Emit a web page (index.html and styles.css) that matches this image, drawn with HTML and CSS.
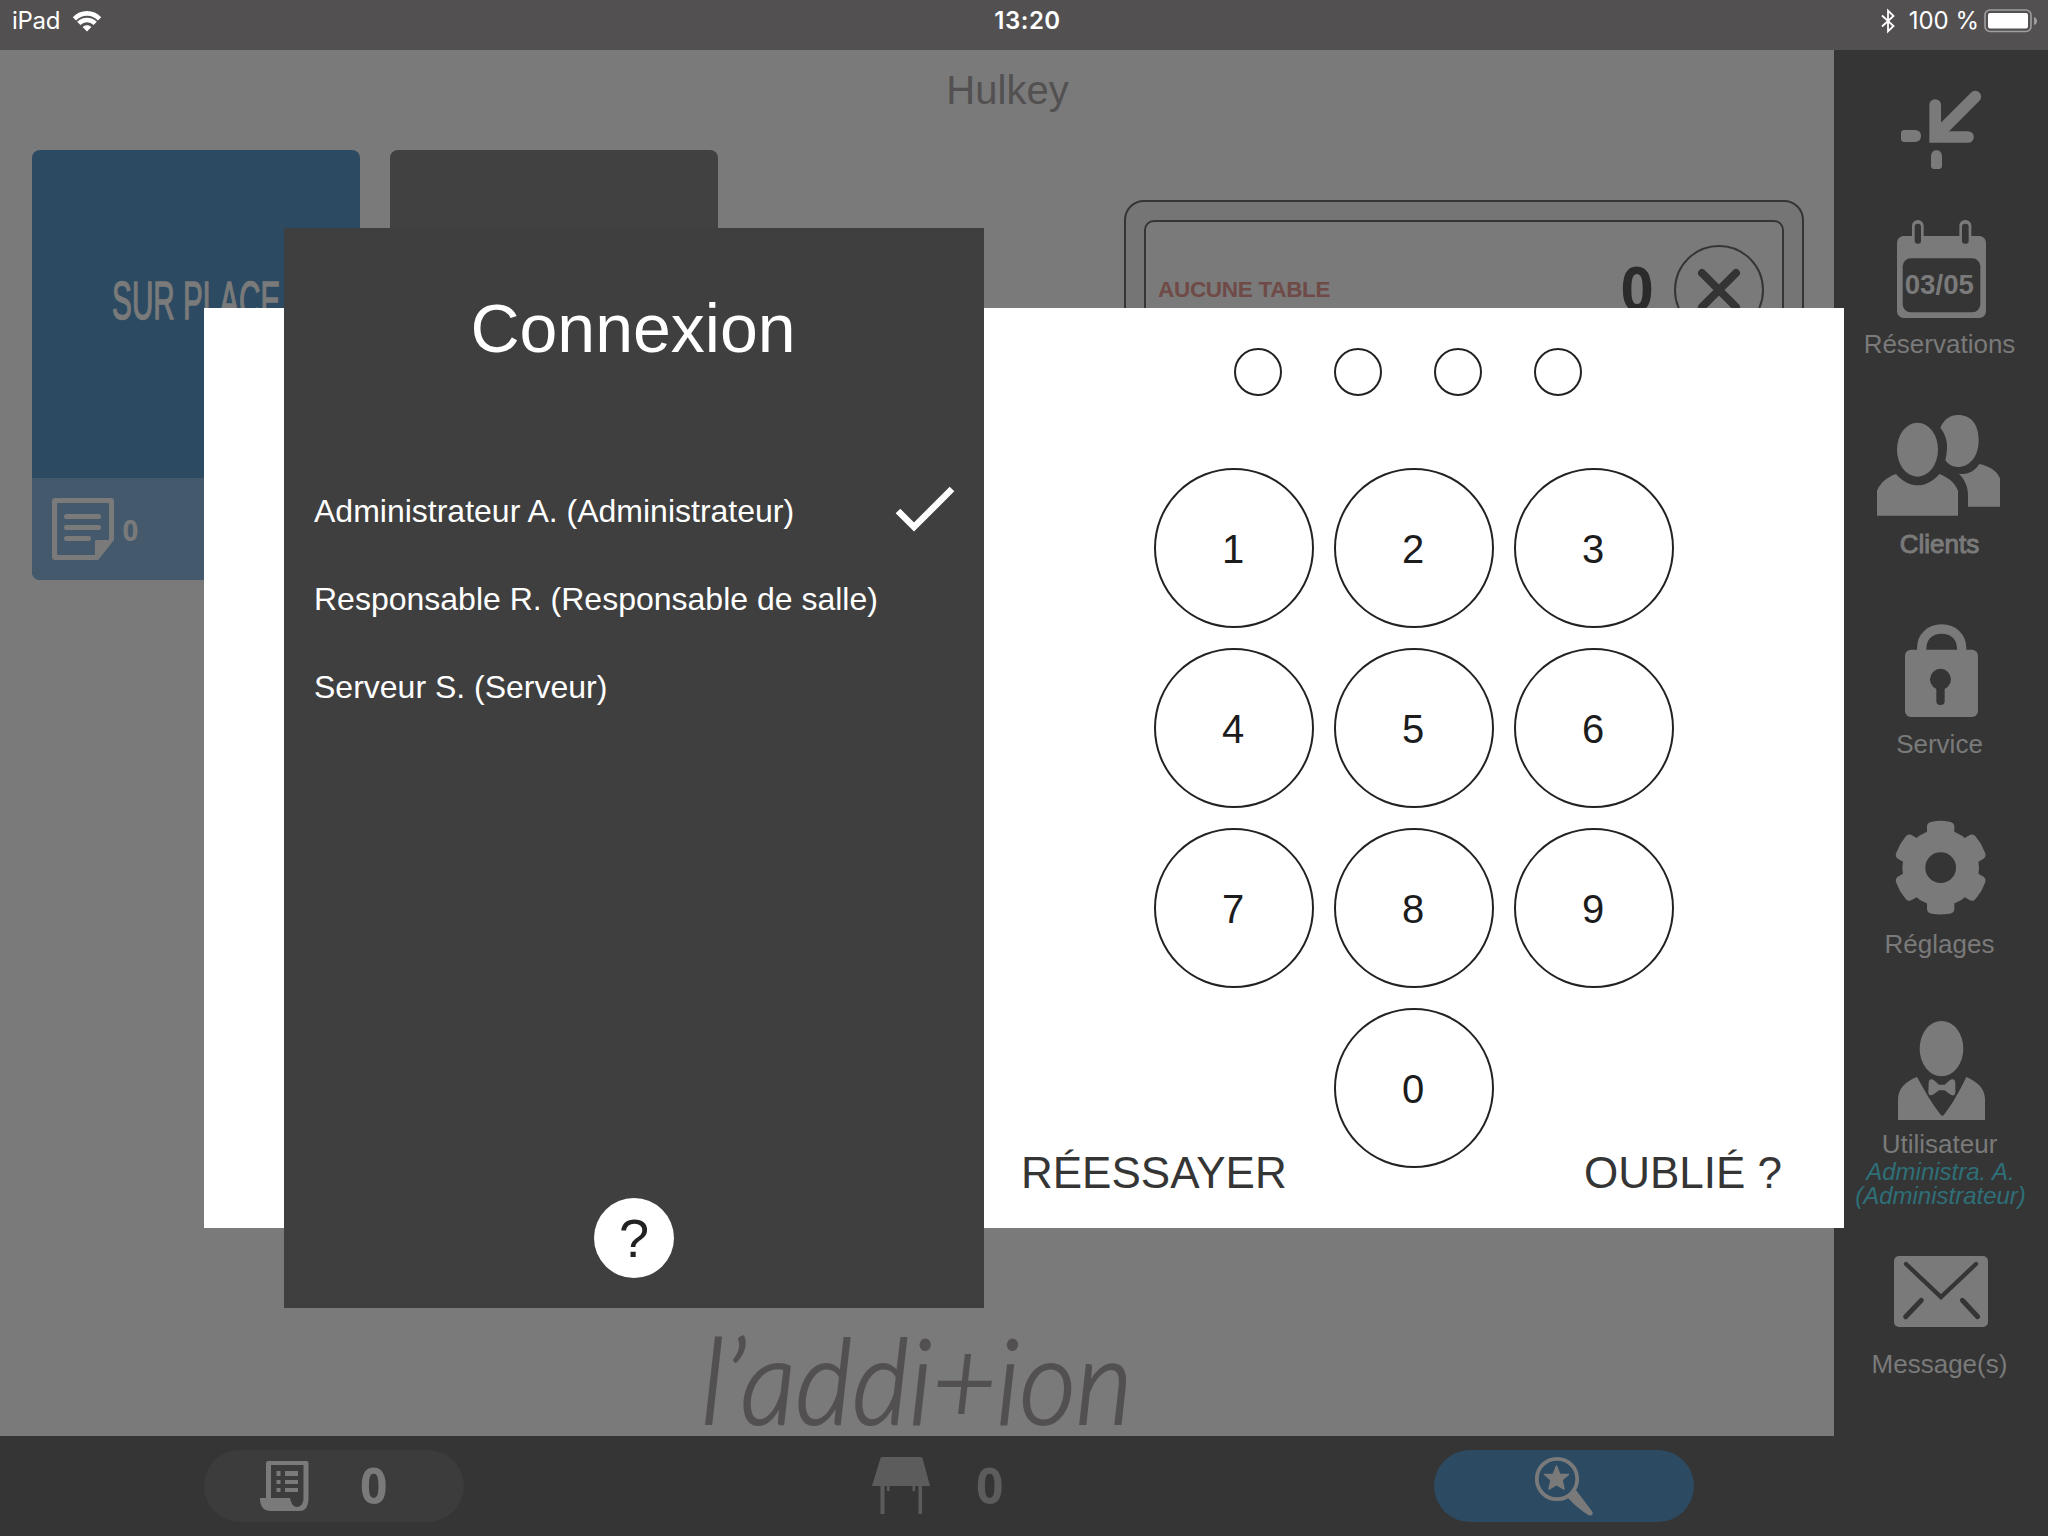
FILE: index.html
```html
<!DOCTYPE html>
<html lang="fr">
<head>
<meta charset="utf-8">
<title>Connexion</title>
<link rel="stylesheet" href="styles.css">
</head>
<body>
<div class="app">
  <header class="status">
    <div class="status-left">
      <span>iPad</span>
      <svg class="wifi" width="30" height="22" viewBox="0 0 30 22" fill="none" stroke="#fff" stroke-width="4.6">
        <path d="M2.4 8.8C9.4 1.6 20.6 1.6 27.6 8.8"/>
        <path d="M6.8 13.4C11.4 8.8 18.6 8.8 23.2 13.4"/>
        <path d="M10.6 17.1C13.2 14.6 16.8 14.6 19.4 17.1L15 21.6Z" fill="#fff" stroke="none"/>
      </svg>
    </div>
    <div class="clock">13:20</div>
    <div class="status-right">
      <svg width="16" height="26" viewBox="0 0 16 26" fill="none" stroke="#fff" stroke-width="1.8"><path d="M2 7.5L13.5 18L8 23.3V2.7L13.5 8L2 18.5"/></svg>
      <span class="percent">100 %</span>
      <svg width="54" height="24" viewBox="0 0 54 24"><rect x="1" y="1" width="46" height="21.500" rx="5" fill="none" stroke="#a09e9f" stroke-width="1.600"/><rect x="4" y="4" width="40" height="15.500" rx="2" fill="#fff"/><path d="M50 8Q53 9 53 12T50 16Z" fill="#a09e9f"/></svg>
    </div>
  </header>

  <main class="room">
    <h1 class="room-name">Hulkey</h1>
    <div class="board">
      <section class="card card-blue">
        <div class="card-title"><span>SUR PLACE</span></div>
        <div class="card-foot">
          <svg width="62" height="62" viewBox="52 498 62 62" fill="#7a7a7a">
            <path fill-rule="evenodd" d="M55 498H111Q114 498 114 501V540L99 559Q98 560 97 560H55Q52 560 52 557V501Q52 498 55 498ZM58 503Q57 503 57 504V554Q57 555 58 555H95V541Q95 540 96 540H109V504Q109 503 108 503Z"/>
            <rect x="64" y="514" width="37" height="5" rx="2.500"/><rect x="64" y="525" width="37" height="5" rx="2.500"/><rect x="64" y="536" width="27" height="5" rx="2.500"/>
          </svg>
          <span class="card-count">0</span>
        </div>
      </section>
      <section class="card card-dark"></section>
      <section class="ticket">
        <div class="ticket-inner">
          <span class="ticket-label">AUCUNE TABLE</span>
          <span class="ticket-count">0</span>
          <span class="ticket-close"><svg width="44" height="44" viewBox="0 0 44 44"><path d="M5 5L39 39M39 5L5 39" stroke="#343434" stroke-width="8" stroke-linecap="round"/></svg></span>
        </div>
      </section>
    </div>
    <div class="brand">l’addi+ion</div>
  </main>

  <nav class="side">
    <svg class="collapse" width="214" height="159" viewBox="1834 50 214 159" fill="none" stroke="#7a7a7a" stroke-width="11.700">
      <path d="M1935.200 105V137H1968" stroke-linecap="round"/><path d="M1975.300 96.700L1936 136" stroke-linecap="round"/>
      <g fill="#7a7a7a" stroke="none"><path d="M1903 130H1915Q1921 130.500 1921 136T1915 142H1903L1901 140V132Z"/><path d="M1931 167V156Q1931.500 150.300 1936.500 150.300T1942 156V167L1940 169H1933Z"/></g>
    </svg>
    <div class="item">
      <svg class="icon" viewBox="1834 209 214 120"><g transform="translate(1820 0) scale(.33333)" fill="#7a7a7a">
        <rect x="231" y="708" width="267" height="246" rx="20"/><rect x="276" y="660" width="35" height="75" rx="17"/><rect x="418" y="660" width="36" height="75" rx="17"/>
        <g fill="#353535"><rect x="248" y="775" width="233" height="162" rx="24"/><rect x="284" y="671" width="19" height="60" rx="9"/><rect x="426" y="671" width="20" height="60" rx="9"/></g>
        <text x="358" y="882" class="cal-date">03/05</text></g></svg>
      <span class="label">Réservations</span>
    </div>
    <div class="item">
      <svg class="icon" viewBox="1834 409 214 120"><g transform="translate(1820 370) scale(.33333)" fill="#7a7a7a">
        <ellipse cx="292.500" cy="239" rx="61.500" ry="81"/>
        <path d="M171 437V362C180 340 200 322 228 312C250 337 272 346 293 346C316 346 338 335 358 312C385 322 405 338 414 362V437Z"/>
        <path d="M361 173C372 148 390 135 414 135C455 135 476 165 476 210C476 262 447 291 414 291C398 291 385 284 376 271C383 240 387 205 361 173Z"/>
        <path d="M478 282C505 288 530 300 540 325V410H444V375C444 350 434 328 417 312C445 314 465 303 478 282Z"/></g></svg>
      <span class="label label-strong">Clients</span>
    </div>
    <div class="item">
      <svg class="icon" viewBox="1834 609 214 120"><g transform="translate(1820 370) scale(.33333)" fill="#7a7a7a">
        <rect x="255" y="839" width="219" height="202" rx="18"/>
        <path d="M305 845V835C305 800 330 777 365 777C400 777 425 800 425 835V845" fill="none" stroke="#7a7a7a" stroke-width="28"/>
        <g fill="#353535"><circle cx="361.500" cy="928" r="31.500"/><rect x="349" y="940" width="25" height="65" rx="12"/></g></g></svg>
      <span class="label">Service</span>
    </div>
    <div class="item">
      <svg class="icon" viewBox="1834 809 214 120"><g transform="translate(1820 770) scale(.33333) translate(362 293)" fill="#7a7a7a">
        <circle r="115"/>
        <g id="teeth"><path id="tooth" d="M-41 -80V-125C-40 -134 -34 -137 -26 -138Q0 -143 26 -138C34 -137 40 -134 41 -125V-80Z"/>
        <use href="#tooth" transform="rotate(60)"/><use href="#tooth" transform="rotate(120)"/><use href="#tooth" transform="rotate(180)"/><use href="#tooth" transform="rotate(240)"/><use href="#tooth" transform="rotate(300)"/></g>
        <circle r="46" fill="#353535"/></g></svg>
      <span class="label">Réglages</span>
    </div>
    <div class="item">
      <svg class="icon" viewBox="1834 1009 214 120"><g transform="translate(1820 770) scale(.33333)" fill="#7a7a7a">
        <ellipse cx="364.500" cy="836" rx="65.500" ry="83"/>
        <path d="M234 1050V985C236 955 255 935 291 921C315 965 337 1003 362 1034Q367 1040 372 1034C397 1003 420 960 439 921C470 935 493 952 495 985V1050Z"/>
        <path d="M326 940C326 928 333 926 341 930L357 944H374L390 930C400 925 406 930 406 940V966C406 977 398 979 390 973L374 961H357L341 973C331 979 325 975 325 965Z"/></g></svg>
      <span class="label">Utilisateur</span>
      <span class="who">Administra. A.<br>(Administrateur)</span>
    </div>
    <div class="item item-last">
      <svg class="icon" viewBox="1834 1229 214 120"><g transform="translate(1820 1130) scale(.33333)">
        <rect x="222" y="378" width="282" height="213" rx="15" fill="#7a7a7a"/>
        <g fill="none" stroke="#353535" stroke-linecap="round" stroke-width="13"><path d="M258 402L363 501L468 402"/><path d="M257 560L304 511M427 511L473 560" stroke-width="15"/></g></g></svg>
      <span class="label">Message(s)</span>
    </div>
  </nav>

  <footer class="bar">
    <div class="pill pill-grey">
      <svg width="49" height="50" viewBox="260 1461 49 50" fill="#7a7a7a"><path fill-rule="evenodd" d="M268 1461H307Q308.500 1461 308.500 1463V1498C308.500 1507 305 1511 300 1511H271C264 1511 260 1507 260 1498H266V1463Q266 1461 268 1461ZM271 1465V1498H290C291 1503 293 1507 297 1507C301 1507 303.500 1503 303.500 1498V1465Z"/><path d="M276.500 1471h4v5h-4zM285 1471h13v5h-13zM276.500 1480h4v4h-4zM285 1480h13v4h-13zM276.500 1488h4v4h-4zM285 1488h13v4h-13z"/></svg>
      <span class="count">0</span>
    </div>
    <div class="pill pill-plain">
      <svg width="58" height="58" viewBox="872 1457 58 58" fill="#5c5c5c"><path d="M882 1457H921L922.500 1458L930 1486H922V1514H918.500V1486H915V1491H912.500V1486H889.500V1491H887V1486H884.500V1514H880.500V1486H872L880.500 1458Z"/></svg>
      <span class="count">0</span>
    </div>
    <div class="pill pill-blue">
      <svg width="58" height="60" viewBox="1535 1456 58 60" fill="#7a7a7a"><circle cx="1557" cy="1479" r="20.200" fill="none" stroke="#7a7a7a" stroke-width="3.800"/><path d="M1568 1498L1576 1490Q1585 1502 1592.500 1512Q1593.500 1516 1589 1515.500Q1577 1508 1568 1498Z"/><path d="M1556.500 1466L1559.800 1474.500H1568.500L1562 1480L1564 1489L1556.500 1484.500L1549 1489L1551 1480L1544.500 1474.500H1553.200Z" stroke="#7a7a7a" stroke-width="1.500" stroke-linejoin="round"/></svg>
    </div>
  </footer>

  <div class="modal">
    <section class="pin">
      <div class="dots"><i></i><i></i><i></i><i></i></div>
      <div class="keys">
        <b>1</b><b>2</b><b>3</b><b>4</b><b>5</b><b>6</b><b>7</b><b>8</b><b>9</b><b class="zero">0</b>
      </div>
      <div class="actions"><span>RÉESSAYER</span><span>OUBLIÉ ?</span></div>
    </section>
    <section class="users">
      <h2>Connexion</h2>
      <ul>
        <li>Administrateur A. (Administrateur)<svg class="check" width="60" height="46" viewBox="0 0 60 46"><path d="M3 25L19 41L57 3" fill="none" stroke="#fff" stroke-width="6.500"/></svg></li>
        <li>Responsable R. (Responsable de salle)</li>
        <li>Serveur S. (Serveur)</li>
      </ul>
      <div class="help">?</div>
    </section>
  </div>
</div>
</body>
</html>
```
FILE: styles.css
```css
* { box-sizing: border-box; }
body { margin: 0; font-family: "Liberation Sans", Arial, sans-serif; }
h1, h2, ul { margin: 0; padding: 0; font-weight: 400; list-style: none; }
svg { display: block; flex: none; }

.app {
  position: relative;
  width: 2048px;
  height: 1536px;
  display: grid;
  grid-template: 50px 1386px 100px / 1834px 214px;
  background: #353535;
  overflow: hidden;
}

/* status bar */
.status {
  grid-column: 1 / 3;
  display: grid;
  grid-template-columns: 1fr auto 1fr;
  align-items: center;
  height: 50px;
  padding: 0 10px 8px 12px;
  background: #535051;
  color: #fff;
  font: 24px/42px Inter, sans-serif;
}
.status-left, .status-right { display: flex; align-items: center; }
.status-left { gap: 12px; letter-spacing: -.3px; }
.status-right { justify-content: flex-end; }
.percent { margin: 0 5px 0 13px; }
.clock { font-weight: 600; letter-spacing: .5px; padding-left: 5px; }

/* room */
.room {
  grid-row: 2 / 3;
  display: flex;
  flex-direction: column;
  background: #7a7a7a;
}
.room-name {
  height: 100px;
  padding: 16px 0 0 181px;
  text-align: center;
  font-size: 40px;
  line-height: 48px;
  color: #535051;
}
.board { display: flex; align-items: flex-start; padding: 0 30px 0 32px; }
.card { width: 328px; height: 430px; border-radius: 8px; overflow: hidden; margin-right: 30px; }
.card-blue { background: #2c4b63; }
.card-dark { background: #414141; }
.card-title {
  height: 328px;
  display: flex;
  align-items: center;
  justify-content: center;
  padding-bottom: 28px;
  font-size: 53px;
  color: #7a7a7a;
}
.card-title span {
  transform: scaleX(.56);
  white-space: nowrap;
  -webkit-text-stroke: 1.500px #7a7a7a;
}
.card-foot {
  display: flex;
  align-items: center;
  height: 102px;
  padding-left: 20px;
  background: #445a6c;
  color: #7a7a7a;
}
.card-count { margin: 2px 0 0 8px; font: 700 29px/40px "Open Sans", sans-serif; transform: scaleX(.95); }
.ticket {
  width: 680px;
  height: 480px;
  margin: 50px 0 0 auto;
  padding: 18px;
  border: 2px solid #353535;
  border-radius: 20px;
  background: #757575;
}
.ticket-inner {
  height: 440px;
  display: flex;
  align-items: flex-start;
  padding: 23px 18px 0 12px;
  border: 2px solid #353535;
  border-radius: 10px;
  background: #7a7a7a;
}
.ticket-label { flex: 1; font-size: 22.500px; font-weight: 700; letter-spacing: -.3px; line-height: 90px; color: #6f4a47; }
.ticket-count { margin: -2px 20px 0 0; font: 700 60px/90px "Open Sans", sans-serif; color: #2b2b2b; transform: scaleX(.95); }
.ticket-close {
  width: 90px;
  height: 90px;
  display: flex;
  align-items: center;
  justify-content: center;
  border: 2px solid #353535;
  border-radius: 50%;
}
.brand {
  margin: auto 0 0;
  height: 110px;
  text-align: center;
  font: italic 300 110px/110px Lato, sans-serif;
  color: #535051;
  -webkit-text-stroke: 2px #535051;
  transform: scaleY(1.07);
  transform-origin: 50% 98px;
}

/* side menu */
.side { grid-area: 2 / 2 / 4 / 3; background: #353535; color: #7a7a7a; }
.item { height: 200px; display: flex; flex-direction: column; align-items: center; }
.item-last { padding-top: 20px; }
.icon { width: 214px; height: 120px; }
.label { font-size: 26px; line-height: 30px; padding-right: 3px; }
.label-strong { -webkit-text-stroke: 1px #7a7a7a; }
.who { padding: 1px 1px 0 0; font-size: 24px; line-height: 24px; font-style: italic; text-align: center; color: #2e6f78; }
.cal-date { font-size: 83px; font-weight: 700; text-anchor: middle; }

/* bottom bar */
.bar {
  display: flex;
  justify-content: space-between;
  padding: 14px 140px 0 204px;
}
.pill { width: 260px; height: 72px; border-radius: 36px; display: flex; align-items: center; }
.pill-grey { background: #3c3c3c; padding-left: 56px; color: #7a7a7a; }
.pill-plain { padding-left: 53px; color: #5c5c5c; }
.pill-blue { background: #2c4b63; justify-content: center; }
.count { font: 700 51px/68px "Open Sans", sans-serif; margin: 0 0 4px 50px; transform: scaleX(.94); }
.pill-plain .count { margin-left: 45px; }

/* login dialog */
.modal {
  position: absolute;
  left: 204px;
  top: 228px;
  display: grid;
  grid-template: 80px 920px 80px / 80px 700px 860px;
}
.pin { grid-area: 2 / 1 / 3 / 4; background: #fff; padding: 40px 0 0 780px; }
.dots { display: flex; justify-content: center; gap: 52px; padding-right: 12px; }
.dots i { width: 48px; height: 48px; border: 2px solid #222; border-radius: 50%; }
.keys {
  display: grid;
  grid-template-columns: repeat(3, 160px);
  gap: 20px;
  justify-content: center;
  margin-top: 72px;
}
.keys b {
  height: 160px;
  border: 2px solid #222;
  border-radius: 50%;
  text-align: center;
  font-size: 40px;
  font-weight: 400;
  line-height: 158px;
  padding-right: 2px;
  color: #1c1c1c;
}
.keys .zero { grid-column: 2; }
.actions {
  display: flex;
  justify-content: space-between;
  margin-top: -20px;
  padding: 0 62px 0 37px;
  font-size: 44px;
  line-height: 50px;
  color: #353535;
}
.users {
  grid-area: 1 / 2 / 4 / 3;
  display: flex;
  flex-direction: column;
  padding: 60px 30px 30px;
  background: #3f3f3f;
  color: #fff;
}
.users h2 { font-size: 68px; line-height: 80px; text-align: center; padding-right: 2px; }
.users ul { margin-top: 99px; }
.users li { display: flex; align-items: center; justify-content: space-between; height: 88px; font-size: 32px; }
.check { margin: 0 -1px 4px 0; }
.help {
  width: 80px;
  height: 80px;
  margin: auto auto 0;
  border-radius: 50%;
  background: #fff;
  color: #222;
  text-align: center;
  font-size: 54px;
  line-height: 80px;
}
```
